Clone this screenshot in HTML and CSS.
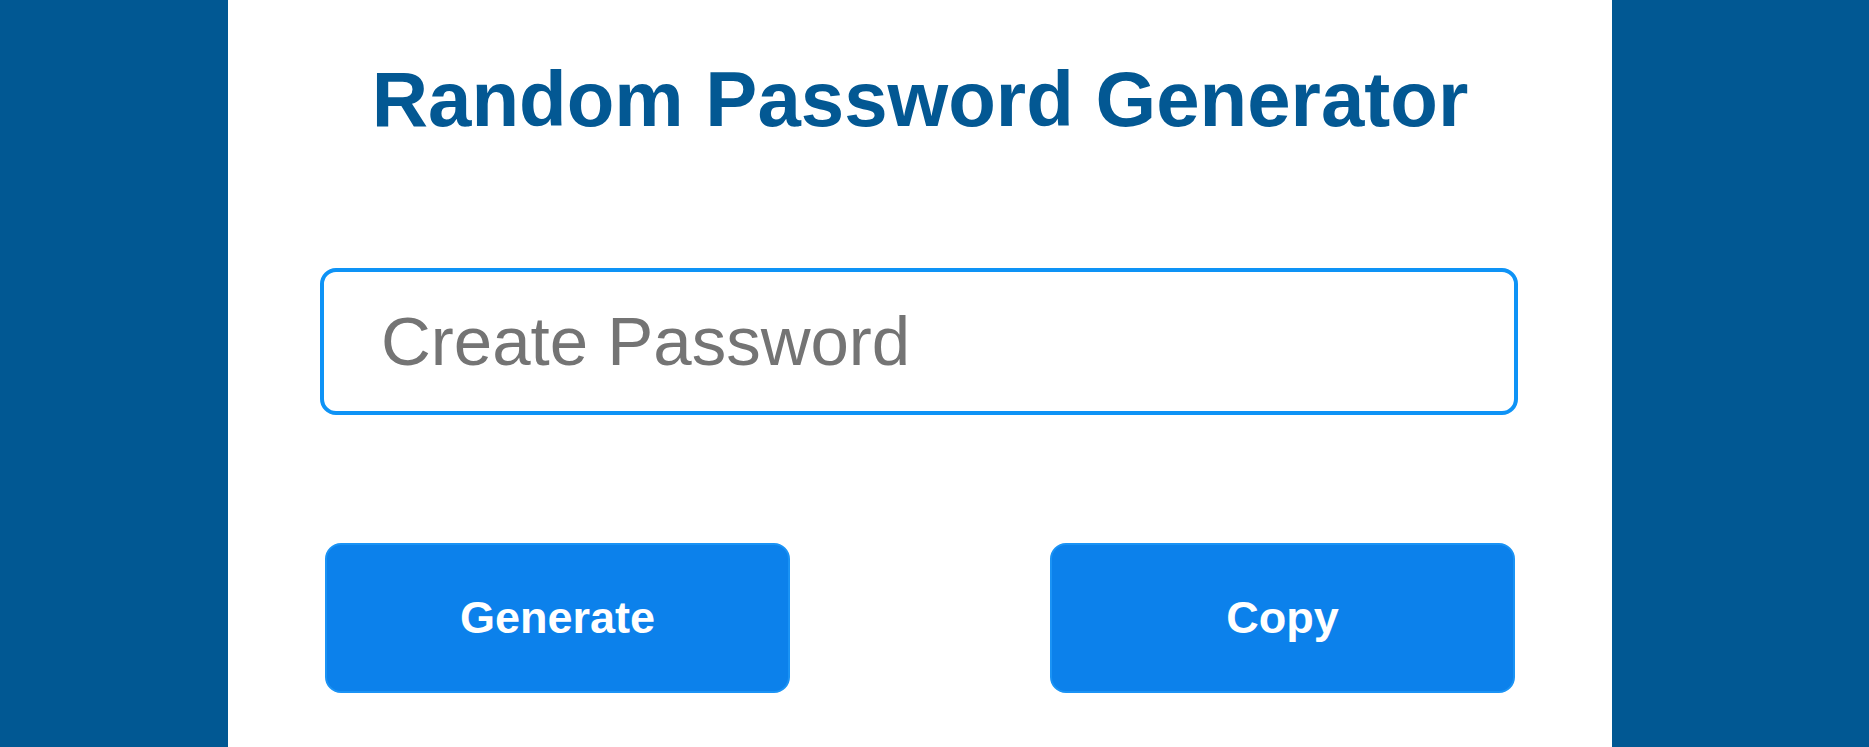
FILE: index.html
```html
<!DOCTYPE html>
<html lang="en">
<head>
<meta charset="utf-8">
<title>Random Password Generator</title>
<link rel="stylesheet" href="styles.css">
</head>
<body>
  <main class="card">
    <h1 class="title">Random Password Generator</h1>
    <input class="password" type="text" placeholder="Create Password">
    <div class="actions">
      <button class="btn" type="button">Generate</button>
      <button class="btn" type="button">Copy</button>
    </div>
  </main>
</body>
</html>
```
FILE: styles.css
```css
html, body {
  margin: 0;
  padding: 0;
}
body {
  background: #015893;
  font-family: "Liberation Sans", Arial, sans-serif;
  height: 747px;
  overflow: hidden;
}
.card {
  width: 1384px;
  height: 747px;
  margin-left: 228px;
  background: #ffffff;
  box-sizing: border-box;
  padding-top: 60px;
  display: flex;
  flex-direction: column;
  align-items: center;
}
.title {
  margin: 0;
  font-size: 78px;
  line-height: 78px;
  font-weight: 700;
  color: #035893;
  text-align: center;
}
.password {
  align-self: flex-start;
  margin: 130px 0 0 92px;
  width: 1198px;
  height: 147px;
  box-sizing: border-box;
  border: 4px solid #0e93f6;
  border-radius: 16px;
  padding: 0 0 0 57px;
  font-family: "Liberation Sans", Arial, sans-serif;
  font-size: 69px;
  color: #333;
  outline: none;
  background: #fff;
}
.password::placeholder {
  color: #747474;
}
.actions {
  margin-top: 128px;
  width: 1190px;
  display: flex;
  justify-content: space-between;
}
.btn {
  width: 465px;
  height: 150px;
  box-sizing: border-box;
  background: #0c81eb;
  border: 2px solid #1a93f5;
  border-radius: 16px;
  color: #ffffff;
  font-family: "Liberation Sans", Arial, sans-serif;
  font-weight: 700;
  font-size: 45px;
  cursor: pointer;
}
```
